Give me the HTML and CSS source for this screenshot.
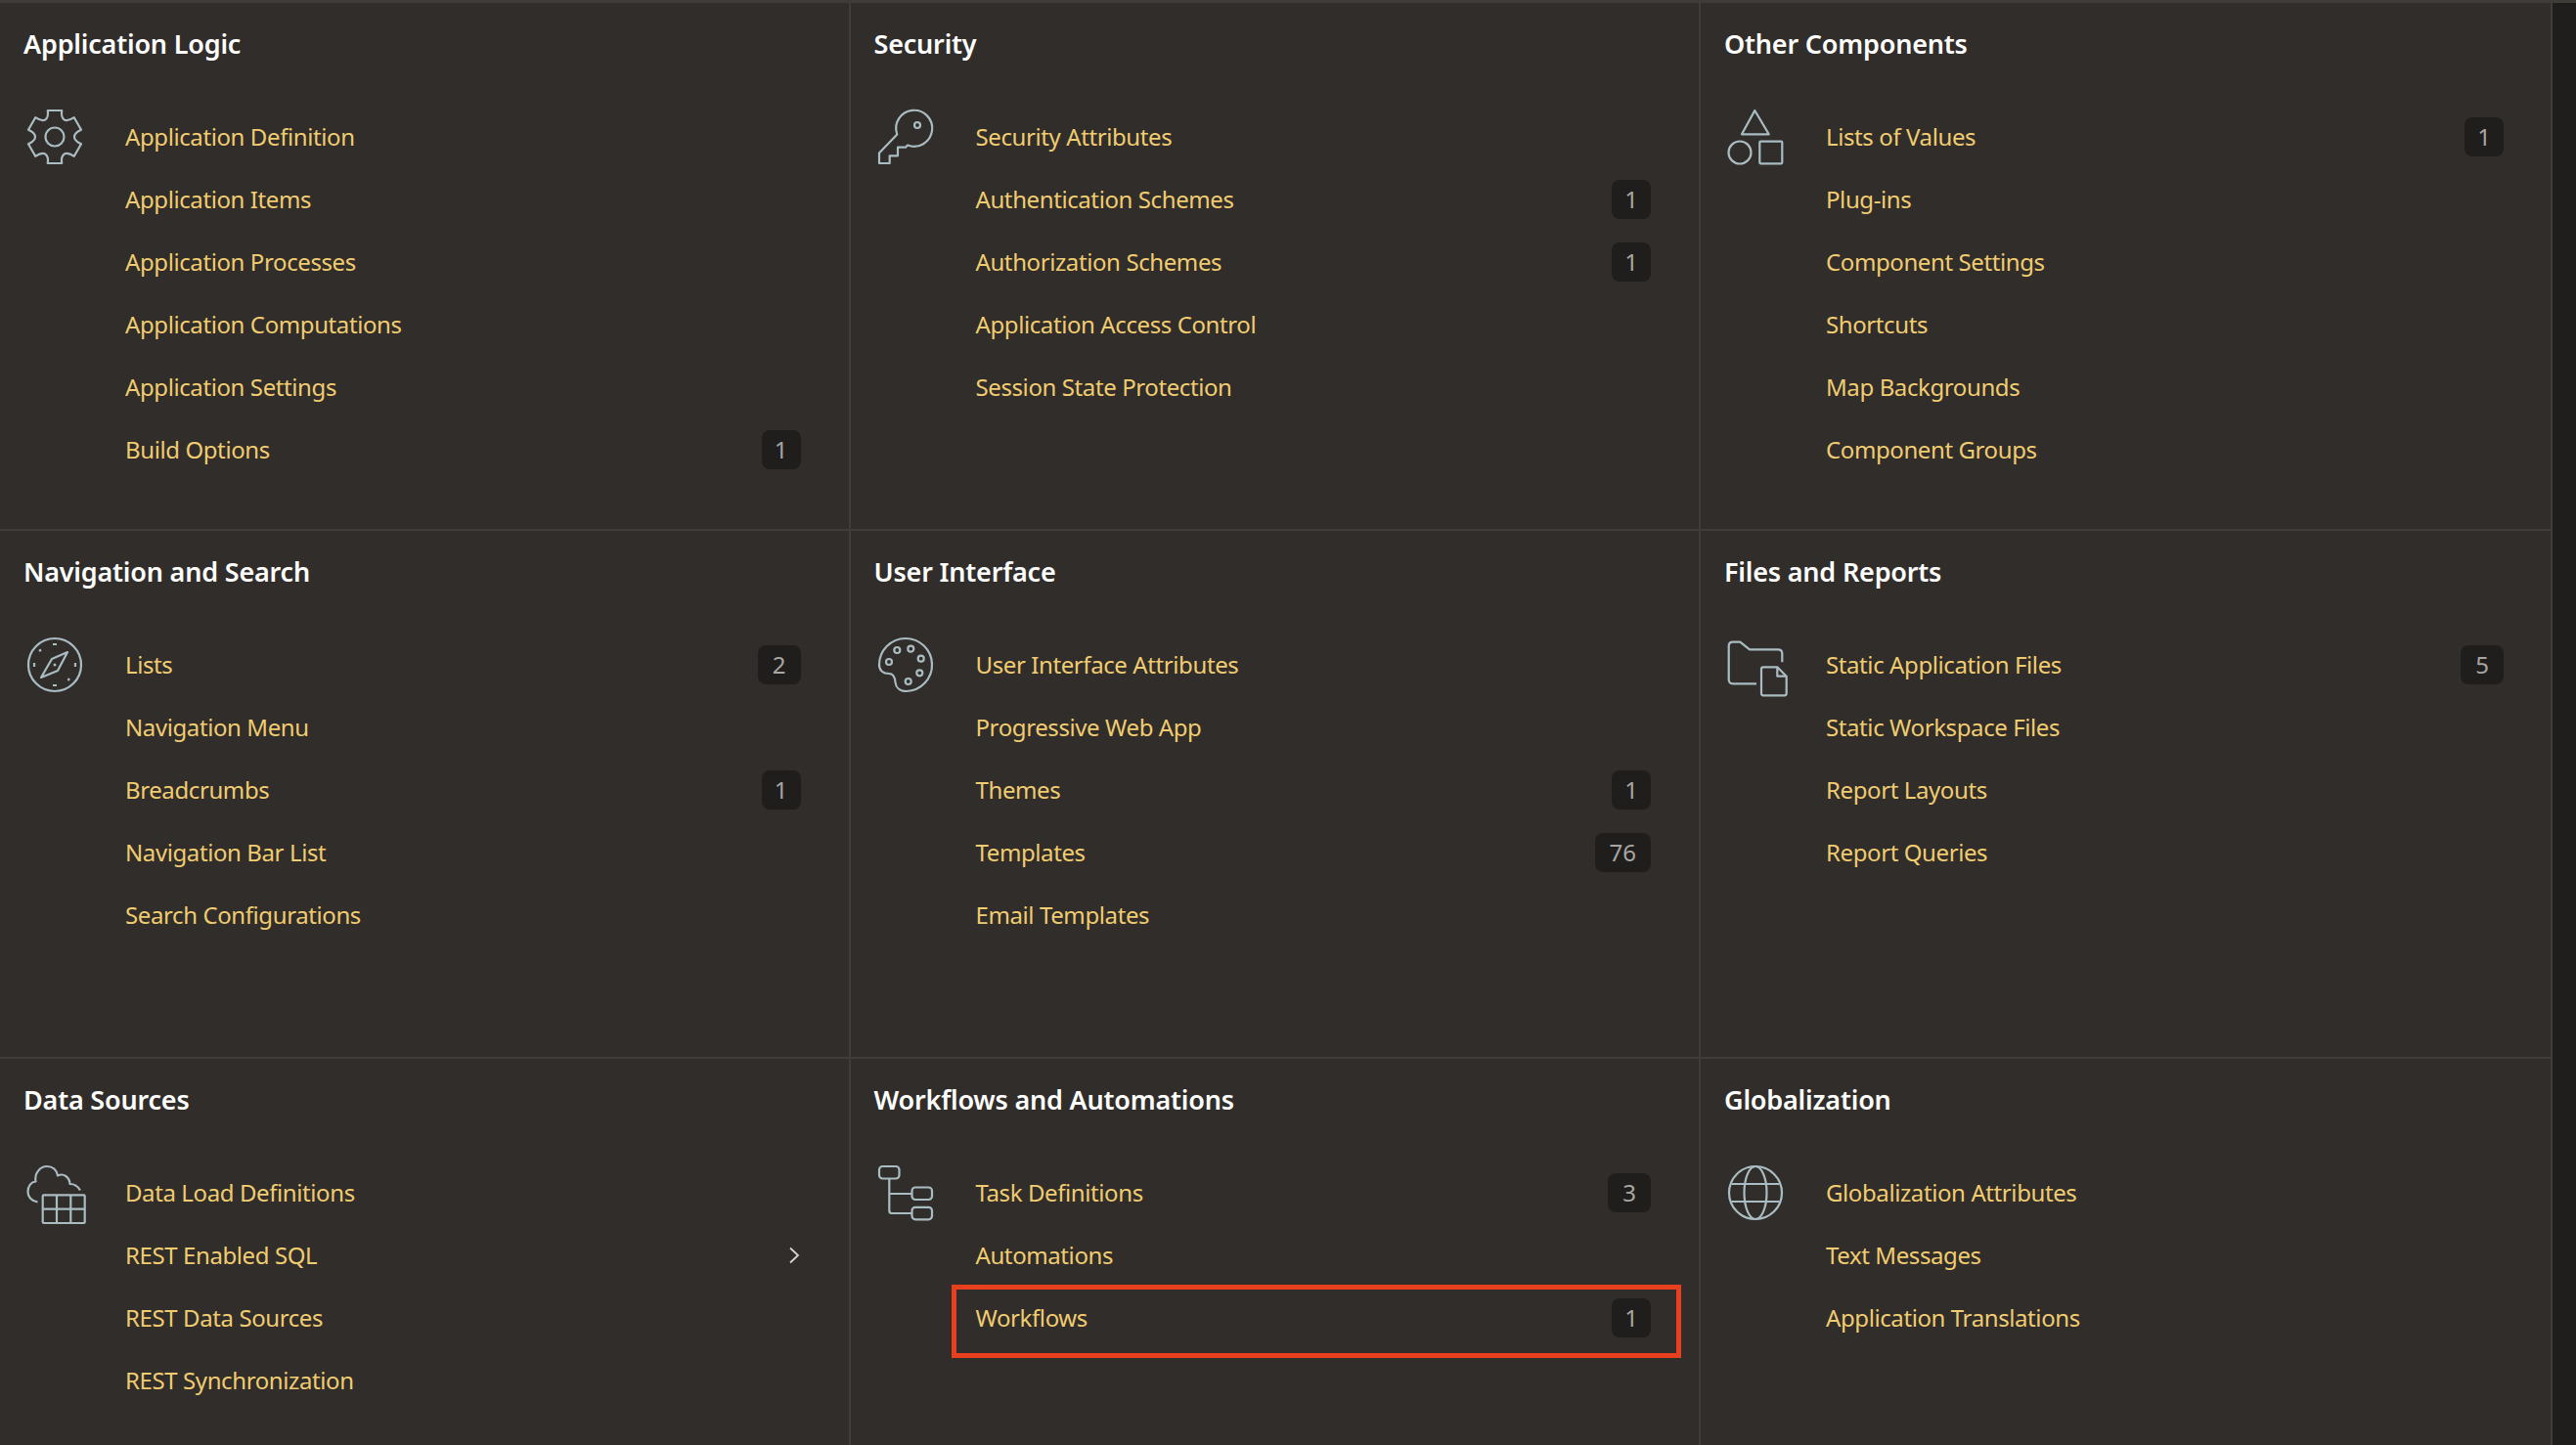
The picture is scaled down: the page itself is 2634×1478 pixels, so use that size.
FILE: index.html
```html
<!DOCTYPE html>
<html lang="en">
<head>
  <meta charset="UTF-8">
  <title>Shared Components</title>
  <link rel="stylesheet" href="styles.css">
</head>
<body>
  <div class="page">
    <main class="grid">

      <section class="cell">
        <h2>Application Logic</h2>
        <div class="cell-body">
          <div class="icon-col">
            <svg class="icon" viewBox="0 0 56 56"><path d="M20.75 1L35.25 1Q34 8 38 10.7Q42 12 47.8 8.2L55 20.75Q48 24 48 28Q48 32 55 35.25L47.8 47.8Q42 44 38 45.3Q34 48 35.25 55L20.75 55Q22 48 18 45.3Q14 44 8.2 47.8L1 35.25Q8 32 8 28Q8 24 1 20.75L8.2 8.2Q14 12 18 10.7Q22 8 20.75 1Z"/><circle cx="28" cy="28" r="9.5"/></svg>
          </div>
          <ul class="links">
            <li><a href="#">Application Definition</a></li>
            <li><a href="#">Application Items</a></li>
            <li><a href="#">Application Processes</a></li>
            <li><a href="#">Application Computations</a></li>
            <li><a href="#">Application Settings</a></li>
            <li><a href="#">Build Options</a><span class="badge badge-slim">1</span></li>
          </ul>
        </div>
      </section>

      <section class="cell">
        <h2>Security</h2>
        <div class="cell-body">
          <div class="icon-col">
            <svg class="icon" viewBox="0 0 56 56"><path d="M30 36.500A18.500 18.500 0 1 0 19.300 25.500L1 44.500V55H11.700V47.300H20V38.700H28Z"/><circle cx="40" cy="16" r="3"/></svg>
          </div>
          <ul class="links">
            <li><a href="#">Security Attributes</a></li>
            <li><a href="#">Authentication Schemes</a><span class="badge badge-slim">1</span></li>
            <li><a href="#">Authorization Schemes</a><span class="badge badge-slim">1</span></li>
            <li><a href="#">Application Access Control</a></li>
            <li><a href="#">Session State Protection</a></li>
          </ul>
        </div>
      </section>

      <section class="cell">
        <h2>Other Components</h2>
        <div class="cell-body">
          <div class="icon-col">
            <svg class="icon" viewBox="0 0 56 56"><path d="M27.3 1L41.7 25.3H14Z"/><circle cx="12" cy="44" r="11.5"/><rect x="32.3" y="32.7" width="23" height="22.6" rx="1"/></svg>
          </div>
          <ul class="links">
            <li><a href="#">Lists of Values</a><span class="badge badge-slim">1</span></li>
            <li><a href="#">Plug-ins</a></li>
            <li><a href="#">Component Settings</a></li>
            <li><a href="#">Shortcuts</a></li>
            <li><a href="#">Map Backgrounds</a></li>
            <li><a href="#">Component Groups</a></li>
          </ul>
        </div>
      </section>

      <section class="cell">
        <h2>Navigation and Search</h2>
        <div class="cell-body">
          <div class="icon-col">
            <svg class="icon" viewBox="0 0 56 56"><circle cx="28" cy="28" r="27"/><path d="M41 15L25 22L14 41L31 34Z"/><circle class="dot" cx="28" cy="28" r="1.5"/><path d="M26 7H30M26 49H30M7 26V30M49 26V30M12 14L14 12.500M41.500 44L43 42"/></svg>
          </div>
          <ul class="links">
            <li><a href="#">Lists</a><span class="badge">2</span></li>
            <li><a href="#">Navigation Menu</a></li>
            <li><a href="#">Breadcrumbs</a><span class="badge badge-slim">1</span></li>
            <li><a href="#">Navigation Bar List</a></li>
            <li><a href="#">Search Configurations</a></li>
          </ul>
        </div>
      </section>

      <section class="cell">
        <h2>User Interface</h2>
        <div class="cell-body">
          <div class="icon-col">
            <svg class="icon" viewBox="0 0 56 56"><path d="M1 28A27 27 0 1 1 29 55C22 55 18 51 17.500 46C17 40 15 37 11 37C5 37 1 34 1 28Z"/><circle cx="19.300" cy="13" r="3"/><circle cx="33.300" cy="11.700" r="3"/><circle cx="43.700" cy="21.700" r="3"/><circle cx="42.300" cy="36.300" r="3"/><circle cx="30.700" cy="45" r="3"/><circle cx="11" cy="25" r="3"/></svg>
          </div>
          <ul class="links">
            <li><a href="#">User Interface Attributes</a></li>
            <li><a href="#">Progressive Web App</a></li>
            <li><a href="#">Themes</a><span class="badge badge-slim">1</span></li>
            <li><a href="#">Templates</a><span class="badge">76</span></li>
            <li><a href="#">Email Templates</a></li>
          </ul>
        </div>
      </section>

      <section class="cell">
        <h2>Files and Reports</h2>
        <div class="cell-body">
          <div class="icon-col">
            <svg class="icon" viewBox="0 0 56 56"><path d="M29 47.300H5Q0.700 47.300 0.700 43V9Q0.700 4.700 5 4.700H12.300L22 12.300H51Q55.300 12.300 55.300 16.500V25.300"/><path d="M50.300 30.300H36Q34 30.300 34 32.300V57.300Q34 59.300 36 59.300H57.700Q59.700 59.300 59.700 57.300V39.700ZM50.300 30.300V39.700H59.700"/></svg>
          </div>
          <ul class="links">
            <li><a href="#">Static Application Files</a><span class="badge">5</span></li>
            <li><a href="#">Static Workspace Files</a></li>
            <li><a href="#">Report Layouts</a></li>
            <li><a href="#">Report Queries</a></li>
          </ul>
        </div>
      </section>

      <section class="cell">
        <h2>Data Sources</h2>
        <div class="cell-body">
          <div class="icon-col">
            <svg class="icon" viewBox="0 0 56 56"><path d="M10.500 37.500C4 36.500 0.500 32 0.500 27C0.500 21 4 17 8.500 16.500C7 8 13 1 20 1C26 1 30 5 31 10.500C37 7.500 43 12 43.500 19C48 19 52 22 54 25.500"/><rect x="15.700" y="30.300" width="43" height="28.700" rx="1"/><path d="M30 30.300V59M44.300 30.300V59M15.700 44.700H58.700"/></svg>
          </div>
          <ul class="links">
            <li><a href="#">Data Load Definitions</a></li>
            <li><a href="#">REST Enabled SQL</a><svg class="chevron" viewBox="0 0 12 18"><path d="M2 1.500L10 9L2 16.500"/></svg></li>
            <li><a href="#">REST Data Sources</a></li>
            <li><a href="#">REST Synchronization</a></li>
          </ul>
        </div>
      </section>

      <section class="cell">
        <h2>Workflows and Automations</h2>
        <div class="cell-body">
          <div class="icon-col">
            <svg class="icon" viewBox="0 0 56 56"><rect x="1" y="1" width="20.500" height="12.500" rx="3.500"/><rect x="34.500" y="22.500" width="20.500" height="12.500" rx="3.500"/><rect x="34.500" y="42.800" width="20.500" height="12.500" rx="3.500"/><path d="M11.300 13.500V46.500Q11.300 49 13.800 49H34.500M11.300 29H34.500"/></svg>
          </div>
          <ul class="links">
            <li><a href="#">Task Definitions</a><span class="badge">3</span></li>
            <li><a href="#">Automations</a></li>
            <li class="marked"><a href="#">Workflows</a><span class="badge badge-slim">1</span><span class="highlight"></span></li>
          </ul>
        </div>
      </section>

      <section class="cell">
        <h2>Globalization</h2>
        <div class="cell-body">
          <div class="icon-col">
            <svg class="icon" viewBox="0 0 56 56"><circle cx="28" cy="28" r="27"/><ellipse cx="28" cy="28" rx="11.500" ry="27"/><path d="M3.500 19H52.500M3.500 37H52.500"/></svg>
          </div>
          <ul class="links">
            <li><a href="#">Globalization Attributes</a></li>
            <li><a href="#">Text Messages</a></li>
            <li><a href="#">Application Translations</a></li>
          </ul>
        </div>
      </section>

    </main>
    <aside class="rail"></aside>
  </div>
</body>
</html>
```

FILE: styles.css
```css
html, body {
  height: 100%;
}
body {
  margin: 0;
  background-color: #312d2a;
  font-family: "Noto Sans", sans-serif;
  overflow: hidden;
}
.page {
  display: flex;
  height: 100%;
  box-sizing: border-box;
  border-top: 3px solid #403c38;
}
.grid {
  width: 2610px;
  flex: none;
  display: grid;
  grid-template-columns: 869.5px 869.5px 871px;
  grid-auto-rows: 540px;
}
.rail {
  flex: 1;
  background-color: #201e1c;
}
.cell {
  box-sizing: border-box;
  padding: 14px 49px 0 24px;
  border-right: 2px solid #403c38;
  border-bottom: 2px solid #403c38;
}
.cell:nth-child(3n) {
  padding-right: 48px;
}
h2 {
  margin: 0 0 35px;
  font-size: 27px;
  letter-spacing: -0.2px;
  line-height: 56px;
  font-weight: 600;
  color: #fff;
}
.cell-body {
  display: flex;
}
.icon-col {
  flex: none;
  width: 104px;
  padding: 4px 0 0 4px;
  box-sizing: border-box;
}
.icon {
  display: block;
  width: 56px;
  height: 56px;
  overflow: visible;
  fill: none;
  stroke: #a9bcc1;
  stroke-width: 2.2;
  stroke-linejoin: round;
}
.icon .dot {
  fill: #a9bcc1;
  stroke: none;
}
.links {
  flex: 1;
  margin: 0;
  padding: 0;
  list-style: none;
}
.links li {
  display: flex;
  align-items: center;
  justify-content: space-between;
  height: 64px;
}
.links a {
  padding-bottom: 2px;
  color: #f0cc71;
  font-size: 24px;
  letter-spacing: -0.4px;
  text-decoration: none;
}
.badge {
  box-sizing: border-box;
  min-width: 40px;
  height: 40px;
  padding: 0 15px;
  border-radius: 8px;
  background-color: #201e1c;
  color: #a8a6a3;
  font-size: 24px;
  line-height: 40px;
  text-align: center;
}
.badge-slim {
  padding: 0 13px;
}
.chevron {
  width: 12px;
  height: 18px;
  margin-right: 1px;
  fill: none;
  stroke: #d6d4d0;
  stroke-width: 1.8;
}
.marked {
  position: relative;
}
.highlight {
  position: absolute;
  top: -2px;
  bottom: -9px;
  left: -25px;
  right: -31px;
  border: 5px solid #e8401f;
}
```
